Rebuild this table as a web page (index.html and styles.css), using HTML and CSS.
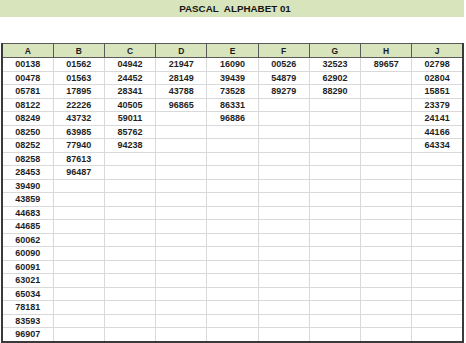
FILE: index.html
```html
<!DOCTYPE html>
<html>
<head>
<meta charset="utf-8">
<link rel="stylesheet" href="styles.css">
</head>
<body>
<div class="title">PASCAL&nbsp; ALPHABET 01</div>
<div class="gap"></div>
<table class="sheet">
<thead>
<tr><th>A</th><th>B</th><th>C</th><th>D</th><th>E</th><th>F</th><th>G</th><th>H</th><th>J</th></tr>
</thead>
<tbody>
<tr><td>00138</td><td>01562</td><td>04942</td><td>21947</td><td>16090</td><td>00526</td><td>32523</td><td>89657</td><td>02798</td></tr>
<tr><td>00478</td><td>01563</td><td>24452</td><td>28149</td><td>39439</td><td>54879</td><td>62902</td><td></td><td>02804</td></tr>
<tr><td>05781</td><td>17895</td><td>28341</td><td>43788</td><td>73528</td><td>89279</td><td>88290</td><td></td><td>15851</td></tr>
<tr><td>08122</td><td>22226</td><td>40505</td><td>96865</td><td>86331</td><td></td><td></td><td></td><td>23379</td></tr>
<tr><td>08249</td><td>43732</td><td>59011</td><td></td><td>96886</td><td></td><td></td><td></td><td>24141</td></tr>
<tr><td>08250</td><td>63985</td><td>85762</td><td></td><td></td><td></td><td></td><td></td><td>44166</td></tr>
<tr><td>08252</td><td>77940</td><td>94238</td><td></td><td></td><td></td><td></td><td></td><td>64334</td></tr>
<tr><td>08258</td><td>87613</td><td></td><td></td><td></td><td></td><td></td><td></td><td></td></tr>
<tr><td>28453</td><td>96487</td><td></td><td></td><td></td><td></td><td></td><td></td><td></td></tr>
<tr><td>39490</td><td></td><td></td><td></td><td></td><td></td><td></td><td></td><td></td></tr>
<tr><td>43859</td><td></td><td></td><td></td><td></td><td></td><td></td><td></td><td></td></tr>
<tr><td>44683</td><td></td><td></td><td></td><td></td><td></td><td></td><td></td><td></td></tr>
<tr><td>44685</td><td></td><td></td><td></td><td></td><td></td><td></td><td></td><td></td></tr>
<tr><td>60062</td><td></td><td></td><td></td><td></td><td></td><td></td><td></td><td></td></tr>
<tr><td>60090</td><td></td><td></td><td></td><td></td><td></td><td></td><td></td><td></td></tr>
<tr><td>60091</td><td></td><td></td><td></td><td></td><td></td><td></td><td></td><td></td></tr>
<tr><td>63021</td><td></td><td></td><td></td><td></td><td></td><td></td><td></td><td></td></tr>
<tr><td>65034</td><td></td><td></td><td></td><td></td><td></td><td></td><td></td><td></td></tr>
<tr><td>78181</td><td></td><td></td><td></td><td></td><td></td><td></td><td></td><td></td></tr>
<tr><td>83593</td><td></td><td></td><td></td><td></td><td></td><td></td><td></td><td></td></tr>
<tr><td>96907</td><td></td><td></td><td></td><td></td><td></td><td></td><td></td><td></td></tr>
</tbody>
</table>
</body>
</html>
```
FILE: styles.css
```css
html, body {
  margin: 0;
  padding: 0;
  background: #ffffff;
}
body {
  font-family: "Liberation Sans", Arial, sans-serif;
  color: #1c1c1c;
}
.title {
  width: 464px;
  height: 17px;
  line-height: 17px;
  background: #d8e4bc;
  text-align: center;
  font-weight: bold;
  font-size: 9.8px;
  padding-left: 6px;
  box-sizing: border-box;
  color: #151515;
}
.gap {
  height: 26px;
}
.sheet {
  margin-left: 1px;
  width: 463px;
  border-collapse: collapse;
  table-layout: fixed;
  border-left: 2px solid #3a3a3a;
  border-right: 2px solid #3a3a3a;
  border-bottom: 2px solid #3a3a3a;
}
.sheet th {
  background: #d8e4bc;
  border: 1px solid #5a5a5a;
  height: 13px;
  padding: 0;
  font-size: 8.5px;
  font-weight: bold;
  text-align: center;
  line-height: 12px;
}
.sheet td {
  border: 1px solid #d9d9d9;
  height: 12.5px;
  padding: 0;
  font-size: 9px;
  font-weight: bold;
  text-align: center;
  line-height: 12px;
  color: #1f1f1f;
}
```
